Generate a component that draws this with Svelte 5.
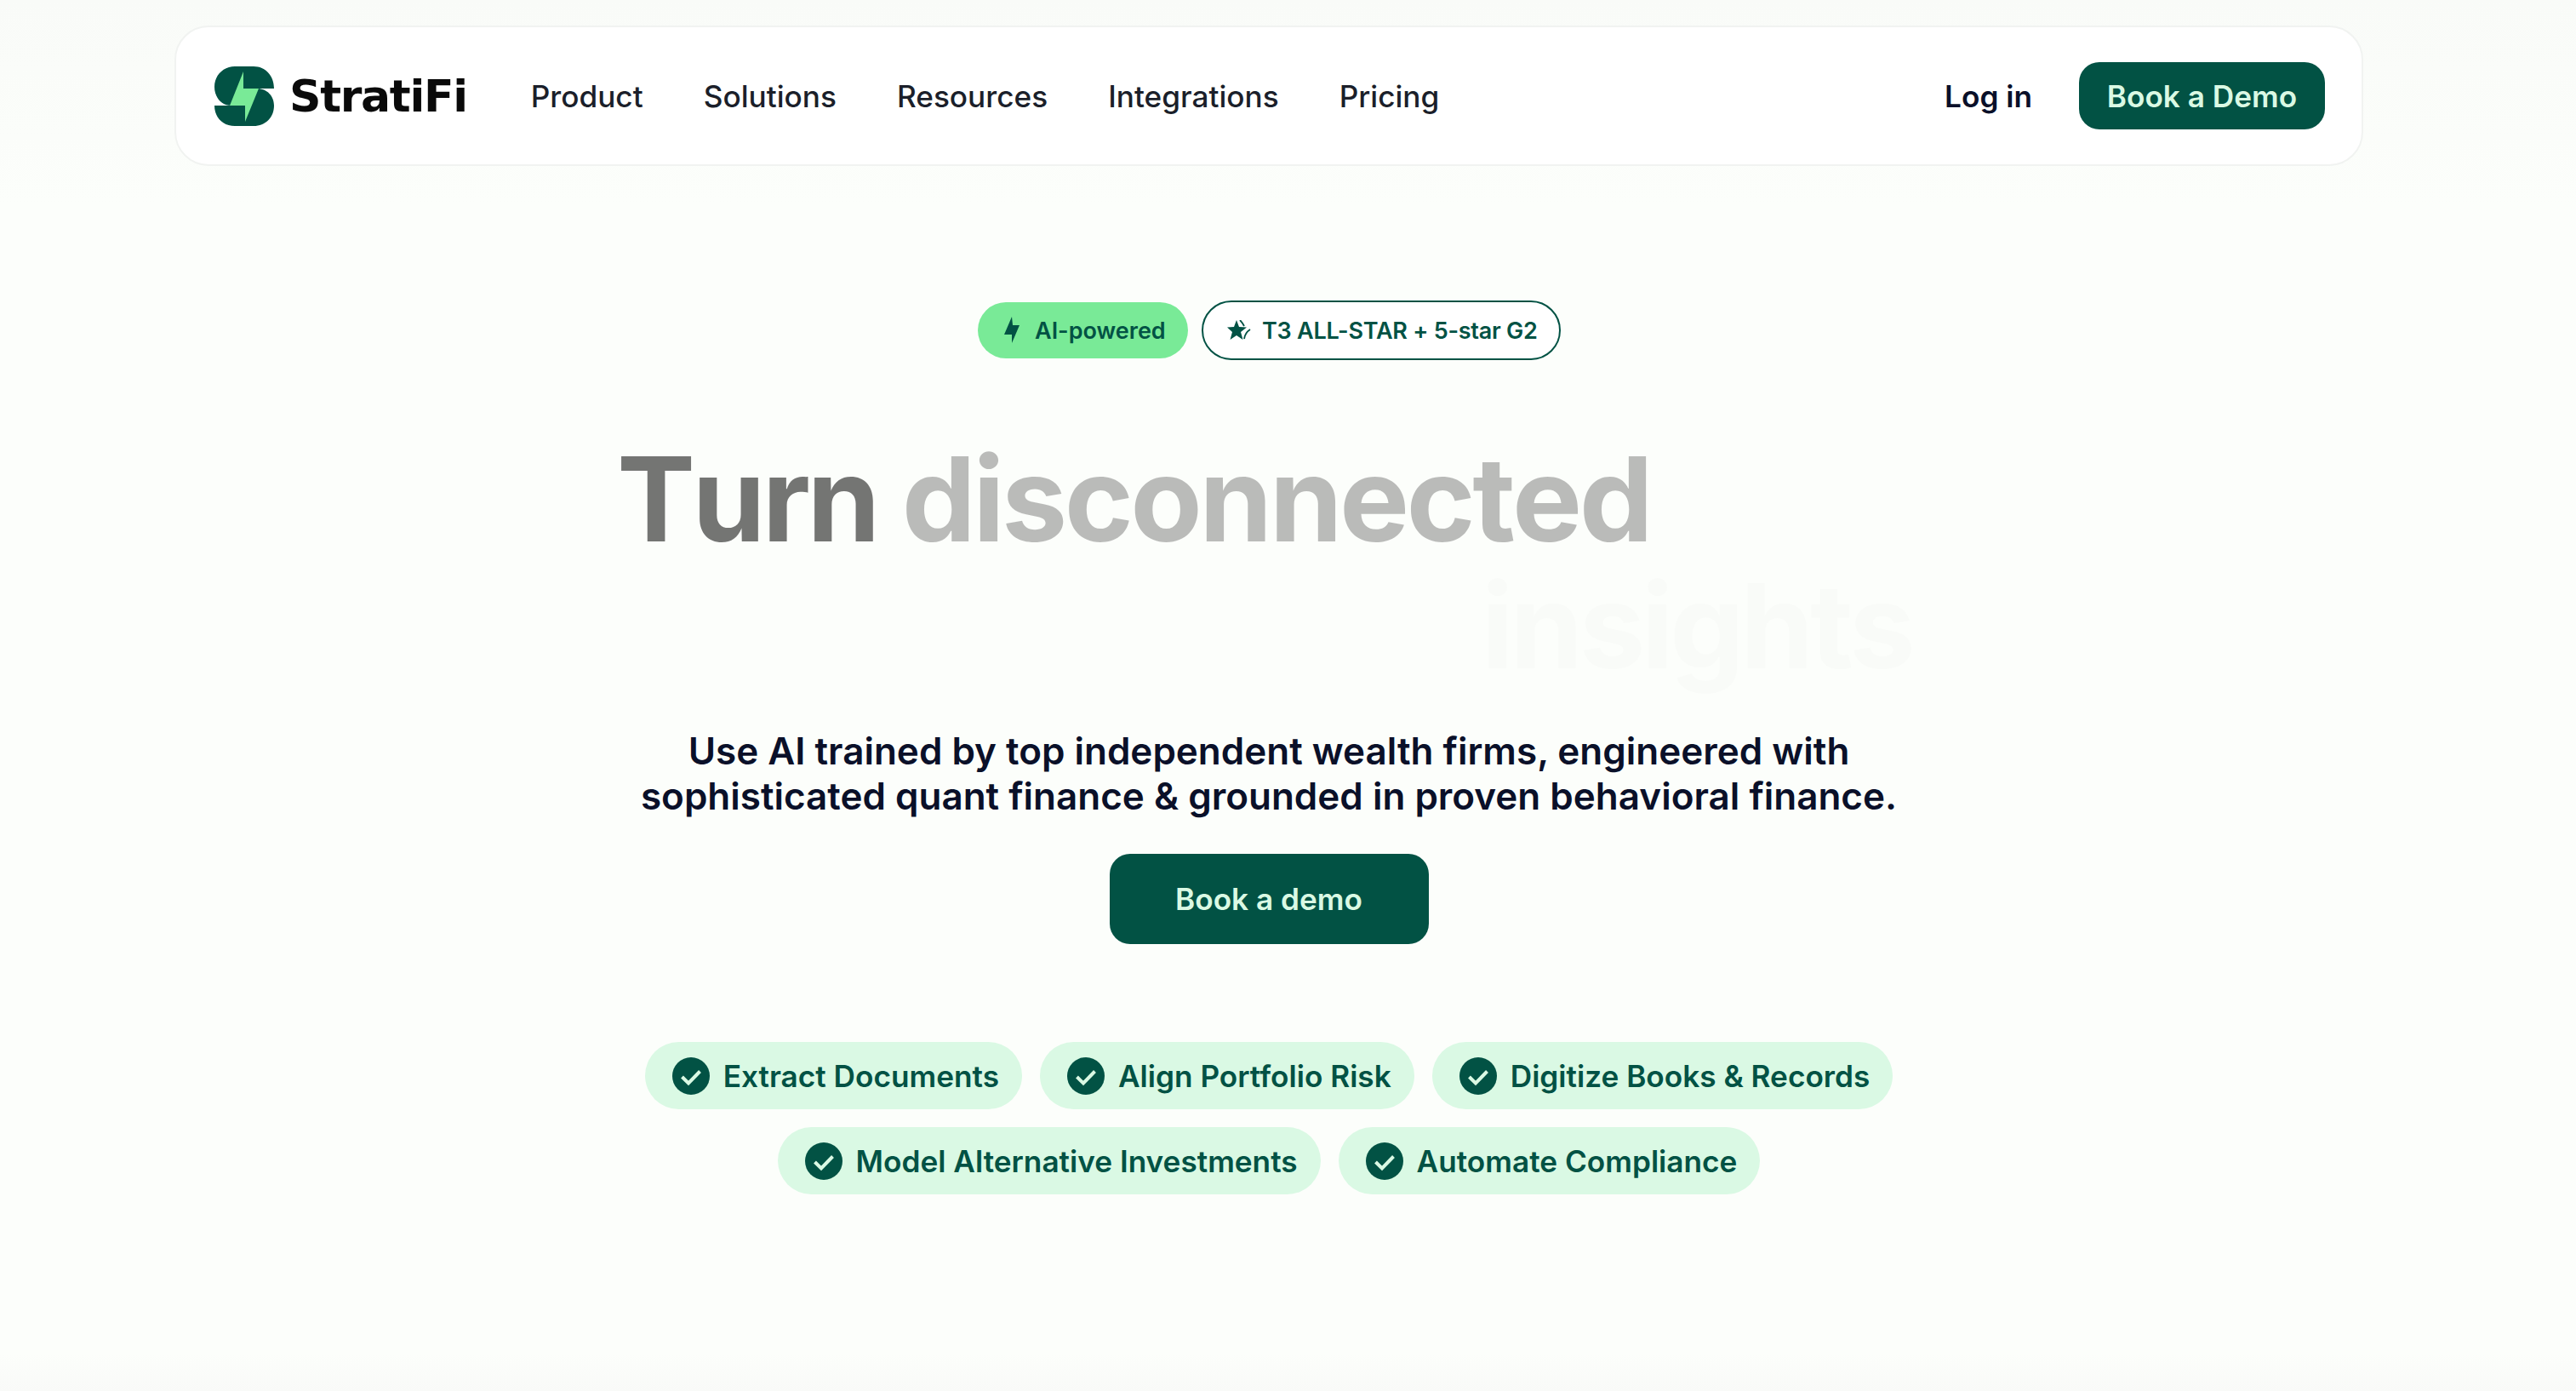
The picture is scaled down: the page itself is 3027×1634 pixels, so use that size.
<script>
  const links = ['Product', 'Solutions', 'Resources', 'Integrations', 'Pricing'];
  const row1 = ['Extract Documents', 'Align Portfolio Risk', 'Digitize Books & Records'];
  const row2 = ['Model Alternative Investments', 'Automate Compliance'];
</script>

{#snippet check()}
  <svg class="check" viewBox="0 0 44 44" aria-hidden="true">
    <circle cx="22" cy="22" r="22" fill="#025244" />
    <path d="M11.500 23l7.500 7.500 13.500-14" fill="none" stroke="#daf9e4" stroke-width="4" />
  </svg>
{/snippet}

{#snippet pill(label)}
  <span class="pill">{@render check()}{label}</span>
{/snippet}

<div class="page">
  <nav class="nav">
    <a class="brand" href="#top">
      <svg class="logo" viewBox="0 0 70 70" aria-hidden="true">
        <path d="M0 24C0 10 11 0 24 0H46C60 0 70 11 70 26H50C62 26 70 35 70 46C70 60 60 70 46 70H24C10 70 0 60 0 46H20C8 46 0 36 0 24Z" fill="#025244" />
        <path d="M34 6L18 46H36V65L52 26H34Z" fill="#79ea97" />
      </svg>
      <span class="wordmark">StratiFi</span>
    </a>
    <div class="links">
      {#each links as link}
        <a href="#top">{link}</a>
      {/each}
    </div>
    <div class="actions">
      <a class="login" href="#top">Log in</a>
      <a class="demo" href="#top">Book a Demo</a>
    </div>
  </nav>

  <main class="hero">
    <div class="badges">
      <span class="badge green">
        <svg class="bolt" viewBox="0 0 18 32" aria-hidden="true"><path d="M9 0L0 21H9V31L18 10H10Z" fill="#025244" /></svg>
        AI-powered
      </span>
      <span class="badge outline">
        <svg class="star" viewBox="0 0 28 24" aria-hidden="true">
          <path d="M11 0L14 8L23 8.500L16 14L18.500 23L11 18L3.500 23L6 14L0 8.500L8 8Z" fill="#025244" />
          <path d="M15 0Q18 3 20 7M27 11Q21 15 20 22" fill="none" stroke="#025244" stroke-width="1.800" />
        </svg>
        T3 ALL-STAR + 5-star G2
      </span>
    </div>
    <h1>
      <span class="line one"><span class="turn">Turn</span> <span class="disc">disconnected</span></span>
      <span class="line two">insights</span>
    </h1>
    <p>Use AI trained by top independent wealth firms, engineered with<br />sophisticated quant finance &amp; grounded in proven behavioral finance.</p>
    <a class="cta" href="#top">Book a demo</a>
    <div class="pills">
      <div class="pill-row">{#each row1 as label}{@render pill(label)}{/each}</div>
      <div class="pill-row">{#each row2 as label}{@render pill(label)}{/each}</div>
    </div>
  </main>
</div>

<style>
  :global(body) {
    margin: 0;
    background: #fcfefb;
    font-family: Inter, "Liberation Sans", sans-serif;
    overflow: hidden;
  }
  a { text-decoration: none; color: inherit; }
  .page {
    height: 1634px;
    overflow: hidden;
    box-sizing: border-box;
    padding: 30px 45px 0 0;
    background: linear-gradient(#f9fbf8 0, #fcfefb 240px, #fcfefb 1590px, #f9faf8 1634px);
  }
  .nav {
    box-sizing: border-box;
    width: 2572px;
    height: 165px;
    margin: 0 auto;
    padding: 0 43px 0 45px;
    display: flex;
    align-items: center;
    background: #fff;
    border: 2px solid #f1f3f1;
    border-radius: 40px;
  }
  .brand { display: flex; align-items: center; gap: 18px; }
  .logo { width: 70px; height: 70px; display: block; }
  .wordmark {
    font-family: "DejaVu Sans", Inter, sans-serif;
    font-size: 52px;
    font-weight: 700;
    color: #0a0a0a;
    letter-spacing: -1.300px;
    line-height: 1;
  }
  .links {
    display: flex;
    gap: 71px;
    margin-left: 75px;
    font-size: 35.200px;
    font-weight: 500;
    color: #1b1f2a;
  }
  .actions { margin-left: auto; display: flex; align-items: center; gap: 55px; }
  .login { font-size: 35.200px; font-weight: 560; color: #0a1029; }
  .demo {
    width: 289px;
    height: 79px;
    display: flex;
    align-items: center;
    justify-content: center;
    background: #025244;
    color: #daf9e4;
    font-size: 35.200px;
    font-weight: 560;
    border-radius: 24px;
  }
  .hero { display: flex; flex-direction: column; align-items: center; }
  .badges { display: flex; align-items: center; gap: 16px; margin-top: 158px; margin-left: 1px; }
  .badge {
    box-sizing: border-box;
    display: flex;
    align-items: center;
    font-size: 27px;
    font-weight: 600;
    color: #025244;
    border-radius: 40px;
  }
  .green { background: #79ea97; height: 66px; width: 247px; padding-left: 31px; gap: 18px; }
  .outline { height: 70px; width: 422px; border: 2.500px solid #025244; padding-left: 28px; gap: 13px; background: #fff; letter-spacing: -0.250px; }
  .bolt { width: 18px; height: 32px; }
  .star { width: 28px; height: 24px; }
  h1 {
    align-self: flex-start;
    margin: 88px 0 0 725px;
    font-size: 138px;
    line-height: 149px;
    font-weight: 700;
    letter-spacing: -3.600px;
    font-kerning: none;
    color: #000;
  }
  .line { display: block; white-space: nowrap; }
  .turn { opacity: 0.537; }
  .disc { opacity: 0.26; }
  .two { margin-left: 1016px; opacity: 0.008; letter-spacing: -4.200px; }
  p {
    margin: 47px 0 0;
    font-size: 44px;
    line-height: 53px;
    font-weight: 560;
    text-align: center;
    color: #0a1029;
  }
  .cta {
    margin-top: 41px;
    width: 375px;
    height: 106px;
    display: flex;
    align-items: center;
    justify-content: center;
    background: #025244;
    color: #daf9e4;
    font-size: 35.200px;
    font-weight: 560;
    border-radius: 24px;
  }
  .pills { margin-top: 115px; display: flex; flex-direction: column; gap: 21px; align-items: center; }
  .pill-row { display: flex; gap: 21px; }
  .pill {
    height: 79px;
    display: flex;
    align-items: center;
    gap: 16px;
    padding: 0 27px 0 32px;
    border-radius: 40px;
    background: #daf9e4;
    color: #025244;
    font-size: 35.200px;
    font-weight: 560;
  }
  .check { width: 44px; height: 44px; flex: none; }
</style>
